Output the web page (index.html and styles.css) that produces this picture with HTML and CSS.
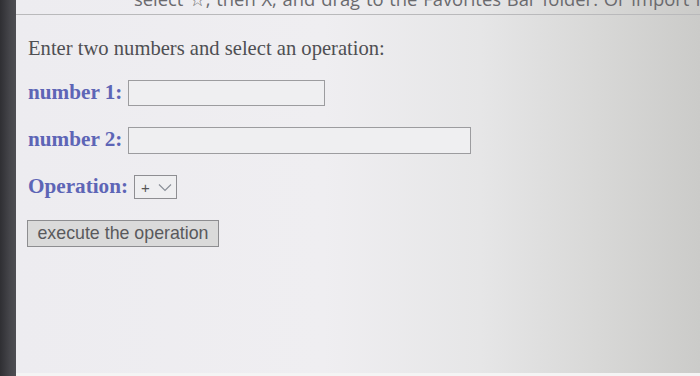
FILE: index.html
```html
<!DOCTYPE html>
<html lang="en">
<head>
<meta charset="utf-8">
<title>Calculator</title>
<link rel="stylesheet" href="styles.css">
</head>
<body>
<div class="screen">
  <div class="bezel"></div>
  <div class="page">
    <div class="topbar"><span class="topbar-text">select ☆, then X, and drag to the Favorites Bar folder. Or import f</span></div>
    <main class="content">
      <p class="intro">Enter two numbers and select an operation:</p>
      <div class="row row-1">
        <label class="label" for="n1">number 1:</label>
        <input class="field field-short" id="n1" type="text">
      </div>
      <div class="row row-2">
        <label class="label" for="n2">number 2:</label>
        <input class="field field-long" id="n2" type="text">
      </div>
      <div class="row row-3">
        <span class="label label-op">Operation:</span>
        <span class="select"><span class="select-value">+</span><svg class="chev" width="14" height="9" viewBox="0 0 14 9"><path d="M1 1.5 L7 7.5 L13 1.5" fill="none" stroke="#8a8f98" stroke-width="1.2"/></svg></span>
      </div>
      <div class="row row-4">
        <button class="exec" type="button">execute the operation</button>
      </div>
    </main>
  </div>
</div>
</body>
</html>
```

FILE: styles.css
```css
html, body {
  margin: 0;
  padding: 0;
  width: 700px;
  height: 376px;
  overflow: hidden;
}

.screen {
  display: flex;
  width: 700px;
  height: 376px;
}

.bezel {
  width: 16px;
  flex: none;
  background: linear-gradient(to right, #2f2f33 0%, #45454a 60%, #4e4e53 100%);
}

.page {
  flex: 1;
  min-width: 0;
  display: flex;
  flex-direction: column;
  background: linear-gradient(to right, #edecf0 0%, #efeef1 45%, #e6e6e7 68%, #d8d8d7 85%, #cbcbc9 100%);
  border-bottom: 3px solid #f4f4f4;
  box-sizing: border-box;
}

.topbar {
  height: 14px;
  overflow: hidden;
  border-bottom: 1px solid #b9b9bb;
  padding-left: 118px;
  white-space: nowrap;
}

.topbar-text {
  display: block;
  margin-top: -14px;
  font-family: "Open Sans", "DejaVu Sans", sans-serif;
  font-size: 18.4px;
  line-height: 26px;
  color: #6a6a6e;
  word-spacing: 1px;
}

.content {
  padding-left: 12px;
  display: flex;
  flex-direction: column;
}

.intro {
  margin: 21px 0 0 0;
  font-family: "Liberation Serif", "Times New Roman", serif;
  font-size: 20.6px;
  line-height: 24px;
  color: #4f4f53;
}

.row {
  display: flex;
  align-items: center;
}

.row-1 { margin-top: 20px; height: 26px; }
.row-2 { margin-top: 21px; height: 27px; }
.row-3 { margin-top: 21px; height: 24px; }
.row-4 { margin-top: 21px; height: 27px; margin-left: -1px; }

.label {
  font-family: "Liberation Serif", "Times New Roman", serif;
  font-weight: bold;
  font-size: 21.2px;
  line-height: 24px;
  color: #5d65b6;
  margin-top: -3px;
}

.label-op {
  font-size: 21.2px;
}

.field {
  box-sizing: border-box;
  height: 100%;
  margin: 0 0 0 6px;
  padding: 0;
  border: 1px solid #9c9c9f;
  background: #efeff1;
}

.field-short { width: 197px; }
.field-long { width: 343px; }

.select {
  box-sizing: border-box;
  margin-left: 6px;
  width: 43px;
  height: 24px;
  border: 1px solid #8e8e92;
  display: flex;
  align-items: center;
  padding-left: 6px;
  gap: 8px;
  background: #efeff1;
}

.select-value {
  font-family: "Liberation Sans", Arial, sans-serif;
  font-size: 15px;
  color: #555;
  line-height: 1;
}

.chev {
  display: block;
}

.exec {
  box-sizing: border-box;
  width: 192px;
  height: 27px;
  margin: 0;
  padding: 0;
  border: 1px solid #8d8d90;
  background: #dadada;
  font-family: "Liberation Sans", Arial, sans-serif;
  font-size: 17.8px;
  color: #59595c;
  line-height: 25px;
}
```
